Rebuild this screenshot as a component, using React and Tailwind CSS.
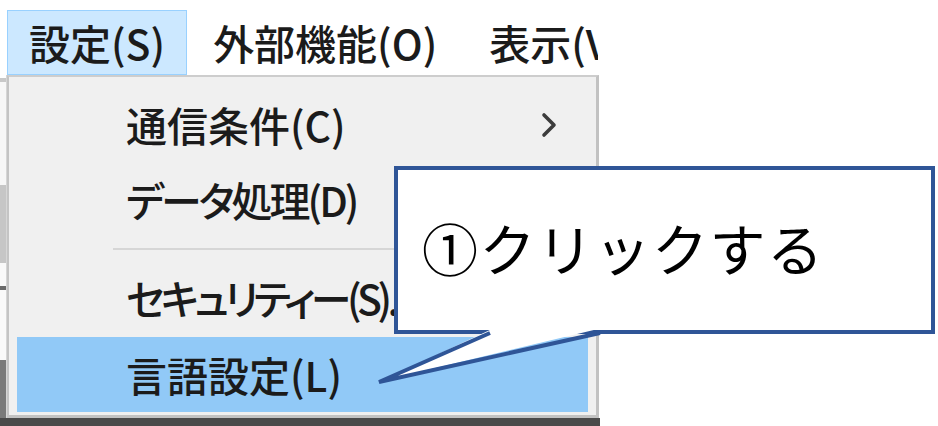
// Windows-style drop-down menu with an annotation callout over it
const items = [
  { label: "通信条件(C)", sub: true },
  { label: "データ処理(D)", tight: "tracking-[-3px]" },
  { sep: true },
  { label: "セキュリティー(S)...", tight: "tracking-[-4.5px]" },
  { label: "言語設定(L)", active: true },
];

function MenuItem({ label, sub, active, tight = "" }) {
  return (
    <div
      className={`flex items-center h-[75px] pl-[109px] pr-[30px] ${
        active ? "bg-[#91c9f7] mt-[2px]" : ""
      }`}
    >
      <span
        className={`flex-1 whitespace-nowrap text-[41px] leading-none font-medium text-[#1b1b1b] [font-feature-settings:'palt'] ${tight}`}
      >
        {label}
      </span>
      {sub && (
        <svg width="18" height="26" viewBox="0 0 18 26" className="shrink-0">
          <polyline
            points="4,3 14,13 4,23"
            fill="none"
            stroke="#3c3c3c"
            strokeWidth="3.6"
            strokeLinecap="round"
            strokeLinejoin="round"
          />
        </svg>
      )}
    </div>
  );
}

function BackWindow() {
  // sliver of the window behind the menu
  return (
    <div className="w-[7px] flex flex-col border-r border-[#d6d6d6]">
      <div className="h-[3px] bg-white" />
      <div className="h-[4px] bg-[#c8c8c8]" />
      <div className="h-[103px] bg-[#f7f7f7]" />
      <div className="h-[78px] bg-[#c6c6c6]" />
      <div className="h-[23px] bg-[#f9f9f9]" />
      <div className="h-[4px] bg-[#6a6a6a]" />
      <div className="h-[70px] bg-[#f9f9f9]" />
      <div className="flex-1 bg-[#7a7a7a]" />
    </div>
  );
}

export default function App() {
  return (
    <div className="relative w-[938px] h-[426px] bg-white overflow-hidden font-['Noto_Sans_CJK_JP',sans-serif]">
      {/* menu bar, cropped at the right like the screenshot */}
      <div className="w-[598px] h-[75px] pt-[10px] pl-[7px] flex overflow-hidden">
        <div className="h-[65px] px-[21px] flex items-center bg-[#cce8ff] border border-[#99d1ff]">
          <span className="text-[41px] leading-none font-medium text-[#1b1b1b] whitespace-nowrap">
            設定(S)
          </span>
        </div>
        <div className="h-[65px] px-[26px] flex items-center">
          <span className="text-[41px] leading-none font-medium text-[#1b1b1b] whitespace-nowrap">
            外部機能(O)
          </span>
        </div>
        <div className="h-[65px] px-[26px] flex items-center">
          <span className="text-[41px] leading-none font-medium text-[#1b1b1b] whitespace-nowrap">
            表示(V)
          </span>
        </div>
      </div>

      {/* drop-down */}
      <div className="flex h-[343px]">
        <BackWindow />
        <div className="w-[592px] bg-[#f0f0f0] border-t-2 border-l-2 border-r-[3px] border-b-[3px] border-t-[#cdcdcd] border-l-[#c4c4c4] border-r-[#c2c2c2] border-b-[#c2c2c2] pt-[10px] px-[8px]">
          {items.map((it, i) =>
            it.sep ? (
              <div key={i} className="h-[23px] flex items-center pl-[96px]">
                <div className="h-[2px] w-full bg-[#d6d6d6]" />
              </div>
            ) : (
              <MenuItem key={i} {...it} />
            )
          )}
        </div>
      </div>
      <div className="w-[600px] h-[8px] bg-[#4a4a4a]" />

      {/* callout */}
      <div className="absolute left-[394px] top-[166px] w-[541px] h-[168px] bg-white border-4 border-[#2f5597] flex items-center pl-[24px] pb-[6px]">
        <span className="text-[56px] leading-none tracking-[1.5px] text-black whitespace-nowrap">①クリックする</span>
      </div>
      <svg className="absolute left-0 top-0 pointer-events-none" width="938" height="426">
        <polygon points="492,329 381,381 598,329" fill="white" />
        <polyline
          points="490,333 379,382 600,333"
          fill="none"
          stroke="#2f5597"
          strokeWidth="4"
          strokeLinejoin="miter"
        />
      </svg>
    </div>
  );
}
